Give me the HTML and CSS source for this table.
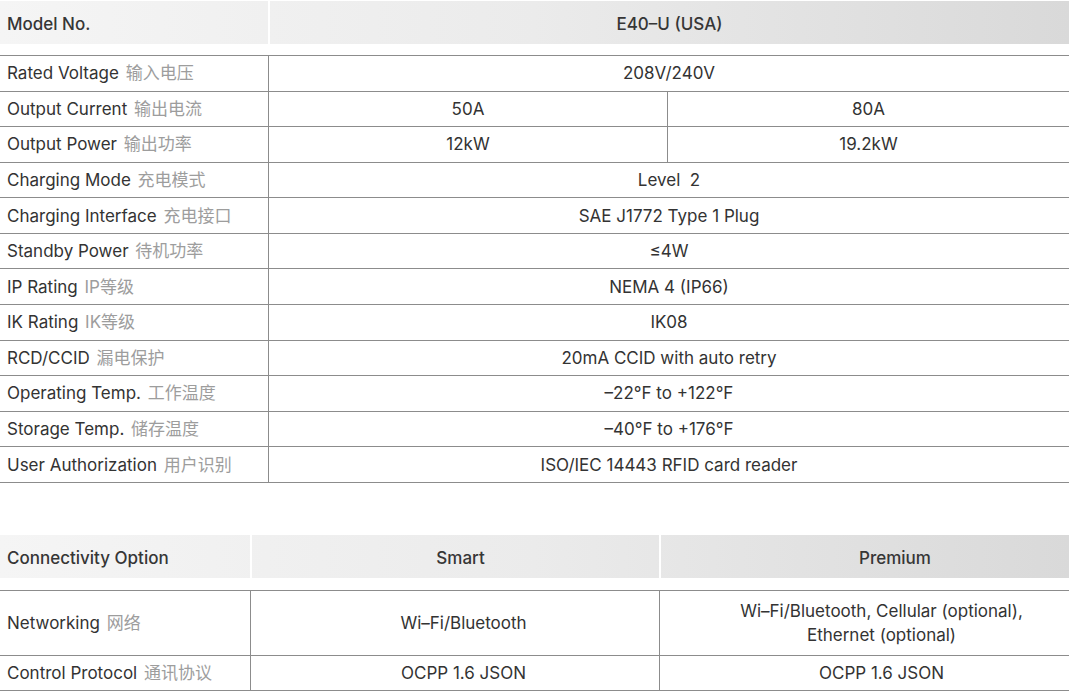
FILE: index.html
```html
<!DOCTYPE html>
<html lang="en">
<head>
<meta charset="utf-8">
<title>E40-U Specifications</title>
<link rel="stylesheet" href="styles.css">
</head>
<body>
<section class="spec spec-main">
  <div class="head head-main">
    <div class="hcell hlab">Model No.</div>
    <div class="hcell hval">E40–U (USA)</div>
  </div>
  <div class="rows">
    <div class="row"><div class="lab"><span class="txt">Rated Voltage <span class="cn">输入电压</span></span></div><div class="val">208V/240V</div></div>
    <div class="row split"><div class="lab"><span class="txt">Output Current <span class="cn">输出电流</span></span></div><div class="val">50A</div><div class="val">80A</div></div>
    <div class="row split"><div class="lab"><span class="txt">Output Power <span class="cn">输出功率</span></span></div><div class="val">12kW</div><div class="val">19.2kW</div></div>
    <div class="row"><div class="lab"><span class="txt">Charging Mode <span class="cn">充电模式</span></span></div><div class="val">Level&nbsp;&nbsp;2</div></div>
    <div class="row"><div class="lab"><span class="txt">Charging Interface <span class="cn">充电接口</span></span></div><div class="val">SAE J1772 Type 1 Plug</div></div>
    <div class="row"><div class="lab"><span class="txt">Standby Power <span class="cn">待机功率</span></span></div><div class="val">≤4W</div></div>
    <div class="row"><div class="lab"><span class="txt">IP Rating <span class="cn">IP等级</span></span></div><div class="val">NEMA 4 (IP66)</div></div>
    <div class="row"><div class="lab"><span class="txt">IK Rating <span class="cn">IK等级</span></span></div><div class="val">IK08</div></div>
    <div class="row"><div class="lab"><span class="txt">RCD/CCID <span class="cn">漏电保护</span></span></div><div class="val">20mA CCID with auto retry</div></div>
    <div class="row"><div class="lab"><span class="txt">Operating Temp. <span class="cn">工作温度</span></span></div><div class="val">–22°F to +122°F</div></div>
    <div class="row"><div class="lab"><span class="txt">Storage Temp. <span class="cn">储存温度</span></span></div><div class="val">–40°F to +176°F</div></div>
    <div class="row"><div class="lab"><span class="txt">User Authorization <span class="cn">用户识别</span></span></div><div class="val">ISO/IEC 14443 RFID card reader</div></div>
  </div>
</section>

<section class="spec spec-conn">
  <div class="head head-conn">
    <div class="hcell hlab">Connectivity Option</div>
    <div class="hcell hval smart">Smart</div>
    <div class="hcell hval premium">Premium</div>
  </div>
  <div class="rows rows-conn">
    <div class="row conn tall"><div class="lab"><span class="txt">Networking <span class="cn">网络</span></span></div><div class="val c2">Wi–Fi/Bluetooth</div><div class="val c3"><span>Wi–Fi/Bluetooth, Cellular (optional),<br>Ethernet (optional)</span></div></div>
    <div class="row conn short"><div class="lab"><span class="txt">Control Protocol <span class="cn">通讯协议</span></span></div><div class="val c2">OCPP 1.6 JSON</div><div class="val c3">OCPP 1.6 JSON</div></div>
  </div>
</section>
</body>
</html>
```

FILE: styles.css
```css
* { box-sizing: border-box; }

body {
  margin: 0;
  width: 1069px;
  font-family: Inter, "Noto Sans CJK SC", sans-serif;
  font-size: 17px;
  color: #333;
  background: #fff;
}

.head {
  display: grid;
  height: 43px;
  background: linear-gradient(90deg, #f5f5f5 0%, #ebebeb 50%, #d9d9d9 100%);
}

.head-main {
  margin-top: 1px;
  grid-template-columns: 268px 1fr;
}

.head-conn {
  grid-template-columns: 250px 409px 1fr;
}

.hcell {
  display: flex;
  align-items: center;
  padding-top: 3px;
  font-weight: 500;
  color: #363636;
}

.hlab {
  padding-left: 7px;
}

.hval {
  justify-content: center;
  border-left: 2px solid #fff;
}

.hval.smart { padding-left: 10px; }
.hval.premium { padding-left: 60px; }

.rows {
  margin-top: 11px;
  border-top: 1px solid #8c8c8c;
}

.rows-conn {
  margin-top: 12px;
}

.row {
  display: grid;
  grid-template-columns: 268px 1fr;
  height: 35.58px;
  border-bottom: 1px solid #8c8c8c;
}

.row.split {
  grid-template-columns: 268px 399px 1fr;
}

.row.conn {
  grid-template-columns: 250px 409px 1fr;
}

.row.tall { height: 65px; }
.row.short { height: 35px; }

.lab {
  display: flex;
  align-items: center;
  padding-left: 7px;
  white-space: nowrap;
}

.txt {
  line-height: 24px;
}

.cn {
  color: #9d9d9d;
  margin-left: 2px;
}

.val {
  display: flex;
  align-items: center;
  justify-content: center;
  text-align: center;
  line-height: 24px;
  border-left: 1px solid #8c8c8c;
}

.val.c2 { padding-left: 17px; }
.val.c3 { padding-left: 34px; }

.spec-conn {
  margin-top: 52px;
}
```
